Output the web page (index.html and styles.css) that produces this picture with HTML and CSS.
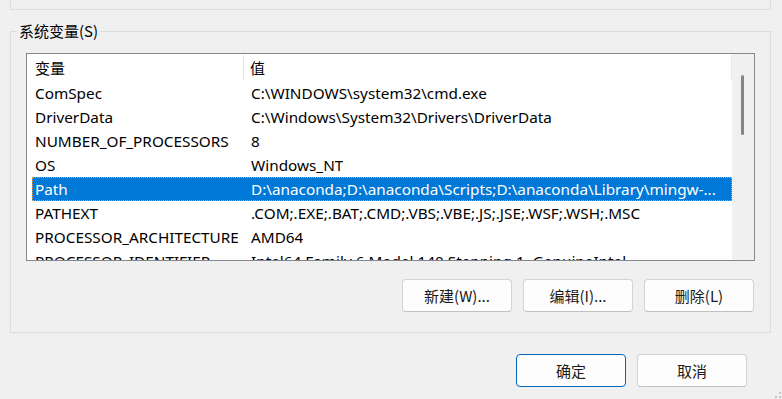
FILE: index.html
```html
<!DOCTYPE html>
<html lang="zh-CN">
<head>
    <meta charset="UTF-8">
    <title>系统变量</title>
    <link rel="stylesheet" href="styles.css">
</head>
<body>
<div class="top-box"></div>
<fieldset class="group">
    <legend>系统变量(S)</legend>
    <div class="list">
        <div class="list-main">
            <div class="list-head">
                <div class="head-name">变量</div>
                <div class="head-value">值</div>
            </div>
            <div class="row"><span class="cell-name">ComSpec</span><span class="cell-value">C:\WINDOWS\system32\cmd.exe</span></div>
            <div class="row"><span class="cell-name">DriverData</span><span class="cell-value">C:\Windows\System32\Drivers\DriverData</span></div>
            <div class="row"><span class="cell-name">NUMBER_OF_PROCESSORS</span><span class="cell-value">8</span></div>
            <div class="row"><span class="cell-name">OS</span><span class="cell-value">Windows_NT</span></div>
            <div class="row selected"><span class="cell-name">Path</span><span class="cell-value">D:\anaconda;D:\anaconda\Scripts;D:\anaconda\Library\mingw-...</span></div>
            <div class="row"><span class="cell-name">PATHEXT</span><span class="cell-value">.COM;.EXE;.BAT;.CMD;.VBS;.VBE;.JS;.JSE;.WSF;.WSH;.MSC</span></div>
            <div class="row"><span class="cell-name">PROCESSOR_ARCHITECTURE</span><span class="cell-value">AMD64</span></div>
            <div class="row"><span class="cell-name">PROCESSOR_IDENTIFIER</span><span class="cell-value">Intel64 Family 6 Model 140 Stepping 1, GenuineIntel</span></div>
        </div>
        <div class="scrollbar"><div class="thumb"></div></div>
    </div>
    <div class="actions">
        <button type="button" class="btn">新建(W)...</button>
        <button type="button" class="btn">编辑(I)...</button>
        <button type="button" class="btn">删除(L)</button>
    </div>
</fieldset>
<div class="footer">
    <button type="button" class="btn primary">确定</button>
    <button type="button" class="btn">取消</button>
</div>
<svg class="grip" width="6" height="6" viewBox="0 0 6 6">
    <rect x="4" y="0" width="2" height="2" fill="#c4c4c4"/>
    <rect x="4" y="4" width="2" height="2" fill="#c4c4c4"/>
    <rect x="0" y="4" width="2" height="2" fill="#c4c4c4"/>
</svg>
</body>
</html>
```

FILE: styles.css
```css
html, body {
    margin: 0;
    height: 100%;
    overflow: hidden;
}
body {
    background: #f0f0f0;
    font-family: "Noto Sans", "Noto Sans CJK SC", sans-serif;
    font-size: 15.3px;
    color: #000;
    position: relative;
}
.top-box {
    box-sizing: border-box;
    width: 761px;
    height: 10px;
    margin-left: 10px;
    border: 1px solid #dcdcdc;
    border-top: none;
}
.group {
    box-sizing: border-box;
    width: 761px;
    min-width: 0;
    margin: 11px 0 0 10px;
    padding: 12px 15px 20px 15px;
    border: 1px solid #dcdcdc;
}
.group legend {
    margin-left: -9px;
    padding: 0 2px;
    line-height: 20px;
    font-family: "Noto Sans CJK SC", sans-serif;
    font-size: 15px;
}
.list {
    display: flex;
    height: 208px;
    box-sizing: border-box;
    border: 1px solid #828790;
    background: #fff;
    overflow: hidden;
}
.list-main {
    width: 705px;
    flex: none;
}
.list-head {
    display: flex;
    height: 27px;
    line-height: 27px;
}
.head-name {
    width: 217px;
    padding-left: 8px;
    box-sizing: border-box;
    border-right: 1px solid #e5e5e5;
    margin: 1px 0 1px;
    line-height: 25px;
    font-family: "Noto Sans CJK SC", sans-serif;
    font-size: 15px;
}
.head-value {
    flex: 1;
    padding-left: 6px;
    border-right: 1px solid #e5e5e5;
    margin: 1px 0 1px;
    line-height: 25px;
    font-family: "Noto Sans CJK SC", sans-serif;
    font-size: 15px;
}
.row {
    display: flex;
    height: 24px;
    line-height: 24px;
    margin-left: 5px;
    white-space: nowrap;
    box-sizing: border-box;
}
.cell-name {
    width: 219px;
    flex: none;
    padding-left: 3px;
    box-sizing: border-box;
    overflow: hidden;
}
.cell-value {
    overflow: hidden;
}
.row.selected {
    background: #0078d7;
    color: #fff;
    outline: 1px dotted #f29a3a;
    outline-offset: -1px;
}
.scrollbar {
    flex: 1;
    background: #f0f0f0;
    padding-top: 21px;
}
.thumb {
    width: 3px;
    height: 60px;
    margin-left: 9px;
    border-radius: 2px;
    background: #858585;
}
.actions {
    display: flex;
    justify-content: flex-end;
    gap: 11px;
    margin-top: 18px;
    padding-right: 1px;
}
.btn {
    width: 110px;
    height: 33px;
    box-sizing: border-box;
    border: 1px solid #d3d3d3;
    border-bottom-color: #c0c0c0;
    border-radius: 4px;
    background: #fdfdfd;
    font-family: "Noto Sans CJK SC", sans-serif;
    font-size: 15px;
    color: #1a1a1a;
    padding: 0;
}
.btn.primary {
    border: 1px solid #0067c0;
}
.footer {
    display: flex;
    justify-content: flex-end;
    gap: 11px;
    margin-top: 21px;
    padding-right: 35px;
}
.grip {
    position: absolute;
    right: 1px;
    bottom: 1px;
}
```
